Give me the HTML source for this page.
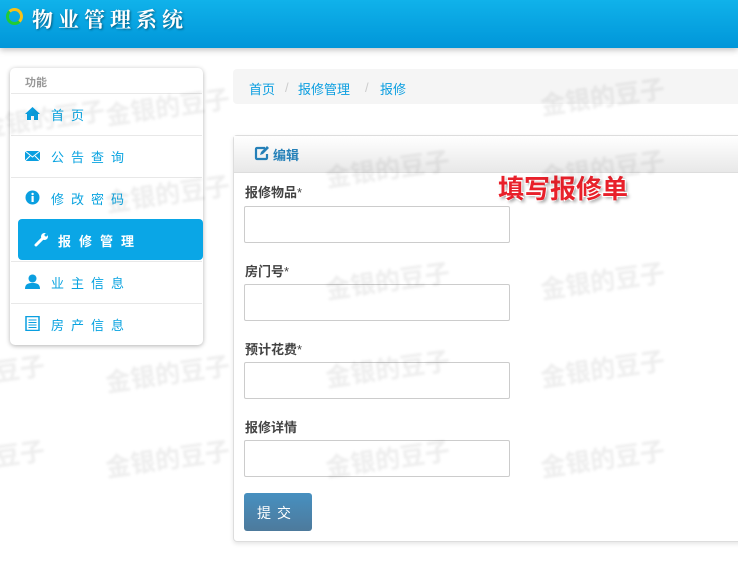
<!DOCTYPE html>
<html><head><meta charset="utf-8"><style>
*{margin:0;padding:0;box-sizing:border-box}
body{width:738px;height:563px;overflow:hidden;background:#fff;font-family:"Liberation Sans","Noto Sans CJK SC",sans-serif;font-size:13px;position:relative}
.hd{position:absolute;left:0;top:0;width:738px;height:48px;background:linear-gradient(#10b2ea,#0096d9);box-shadow:0 2px 6px rgba(0,0,0,.25)}
.hd .t{position:absolute;left:32px;top:4px;color:#fff;font-family:"Noto Serif CJK SC",serif;font-weight:bold;font-size:21px;letter-spacing:5px;text-shadow:1px 1px 2px rgba(0,0,0,.45)}
.logo{position:absolute;left:6px;top:8px;width:17px;height:17px;border-radius:50%;border:3px solid #f7c21a;border-left-color:#2c3;border-bottom-color:#2c3}
.wm{position:absolute;color:rgba(0,0,0,.07);font-size:25px;font-weight:bold;transform:rotate(-8deg);filter:blur(1.2px);white-space:nowrap;z-index:5;pointer-events:none}
.side{position:absolute;left:10px;top:68px;width:193px;height:277px;background:#fff;border-radius:5px;box-shadow:0 1px 5px rgba(0,0,0,.3)}
.side .h{position:absolute;left:15px;top:6px;color:#999;font-size:11px;font-weight:bold}
.it{position:absolute;left:1px;width:191px;height:41px;border-top:1px solid #e8e8e8;color:#09a3e0;letter-spacing:7px;font-size:13px}
.it span{position:absolute;left:40px;top:11px}
.it i{position:absolute;left:14px;top:12px;width:15px;height:15px}
.act{position:absolute;left:8px;top:151px;width:185px;height:41px;background:#0aa6e6;border-radius:4px;color:#fff;font-weight:bold;letter-spacing:8px}
.act span{position:absolute;left:40px;top:12px}
.bc{position:absolute;left:233px;top:69px;width:510px;height:35px;background:#f5f5f5;border-radius:4px;font-size:13px;color:#0b9ee0}
.bc span{position:absolute;top:10px}
.pn{position:absolute;left:233px;top:135px;width:520px;height:407px;border:1px solid #ddd;border-radius:4px;box-shadow:0 2px 4px rgba(0,0,0,.1)}
.ph{height:37px;background:linear-gradient(#fff,#e8e8e8);border-bottom:1px solid #ddd;color:#2580b8;font-weight:bold;font-size:13px;padding:9px 0 0 39px}
.lb{position:absolute;left:11px;font-weight:bold;color:#444;font-size:13px}
.in{position:absolute;left:10px;width:266px;height:37px;border:1px solid #ccc;border-radius:2px}
.btn{position:absolute;left:10px;top:357px;width:68px;height:38px;border-radius:3px;background:linear-gradient(#4790c0,#4d7a9c);color:#fff;font-size:14px;letter-spacing:6px;padding:10px 0 0 13px}
.red{position:absolute;left:498px;top:169px;color:#e8202a;font-size:26px;font-weight:bold;text-shadow:-1px -1px 0 #fff,1px -1px 0 #fff,-1px 1px 0 #fff,2px 2px 3px rgba(0,0,0,.4)}
</style></head><body>
<div class="hd"><div class="logo"></div><div class="t">物业管理系统</div></div>

<div class="side"><div class="h">功能</div>
<div class="it" style="top:25px"><i><svg width="15" height="15" viewBox="0 0 15 15"><path d="M7.5 1L0 8h2v6h4v-4h3v4h4V8h2z" fill="#0a9fe0"/></svg></i><span>首页</span></div>
<div class="it" style="top:67px"><i><svg width="15" height="15" viewBox="0 0 15 15"><path d="M0 3h15v10H0z" fill="#0a9fe0"/><path d="M0 3l7.5 6L15 3M0 13l5-5M15 13l-5-5" stroke="#fff" fill="none"/></svg></i><span>公告查询</span></div>
<div class="it" style="top:109px"><i><svg width="15" height="15" viewBox="0 0 15 15"><circle cx="7.5" cy="7.5" r="7" fill="#0a9fe0"/><rect x="6.5" y="6" width="2.2" height="6" fill="#fff"/><circle cx="7.6" cy="4" r="1.2" fill="#fff"/></svg></i><span>修改密码</span></div>
<div class="act"><i style="position:absolute;left:16px;top:13px"><svg width="15" height="15" viewBox="0 0 15 15"><path d="M2 13L9 6" stroke="#fff" stroke-width="3" stroke-linecap="round"/><circle cx="10.5" cy="4.5" r="3.5" fill="#fff"/><circle cx="12" cy="3" r="1.5" fill="#0aa6e6"/></svg></i><span>报修管理</span></div>
<div class="it" style="top:193px"><i><svg width="15" height="15" viewBox="0 0 15 15"><circle cx="7.5" cy="4.5" r="4" fill="#0a9fe0"/><path d="M0 15c0-5 3-6 7.5-6s7.5 1 7.5 6z" fill="#0a9fe0"/></svg></i><span>业主信息</span></div>
<div class="it" style="top:235px"><i><svg width="15" height="15" viewBox="0 0 15 15"><rect x="1" y="0.5" width="13" height="14" fill="none" stroke="#0a9fe0" stroke-width="1.5"/><path d="M3.5 4h8M3.5 6.5h8M3.5 9h8M3.5 11.5h8" stroke="#0a9fe0"/></svg></i><span>房产信息</span></div>
</div>

<div class="bc"><span style="left:16px">首页</span><span style="left:52px;color:#ccc;top:11px">/</span><span style="left:65px">报修管理</span><span style="left:132px;color:#ccc;top:11px">/</span><span style="left:147px">报修</span></div>

<div class="pn">
<div class="ph"><svg style="position:absolute;left:20px;top:10px" width="15" height="15" viewBox="0 0 15 15"><path d="M11 2H3a1 1 0 0 0-1 1v9a1 1 0 0 0 1 1h9a1 1 0 0 0 1-1V8" stroke="#2580b8" stroke-width="2.2" fill="none"/><path d="M6 9l1-3 6-6 2 2-6 6z" fill="#2580b8"/></svg>编辑</div>
<div class="lb" style="top:46px">报修物品<span style="font-weight:normal">*</span></div>
<div class="in" style="top:70px"></div>
<div class="lb" style="top:125px">房门号<span style="font-weight:normal">*</span></div>
<div class="in" style="top:148px"></div>
<div class="lb" style="top:203px">预计花费<span style="font-weight:normal">*</span></div>
<div class="in" style="top:226px"></div>
<div class="lb" style="top:281px">报修详情</div>
<div class="in" style="top:304px"></div>
<div class="btn">提交</div>
</div>
<div class="red">填写报修单</div>

<div class="wm" style="left:105px;top:88px">金银的豆子</div>
<div class="wm" style="left:325px;top:150px">金银的豆子</div>
<div class="wm" style="left:540px;top:78px">金银的豆子</div>
<div class="wm" style="left:540px;top:150px">金银的豆子</div>
<div class="wm" style="left:-20px;top:100px">金银的豆子</div>
<div class="wm" style="left:105px;top:175px">金银的豆子</div>
<div class="wm" style="left:325px;top:262px">金银的豆子</div>
<div class="wm" style="left:540px;top:262px">金银的豆子</div>
<div class="wm" style="left:105px;top:355px">金银的豆子</div>
<div class="wm" style="left:-80px;top:355px">金银的豆子</div>
<div class="wm" style="left:325px;top:350px">金银的豆子</div>
<div class="wm" style="left:540px;top:350px">金银的豆子</div>
<div class="wm" style="left:-80px;top:440px">金银的豆子</div>
<div class="wm" style="left:105px;top:440px">金银的豆子</div>
<div class="wm" style="left:325px;top:440px">金银的豆子</div>
<div class="wm" style="left:540px;top:440px">金银的豆子</div>
</body></html>
